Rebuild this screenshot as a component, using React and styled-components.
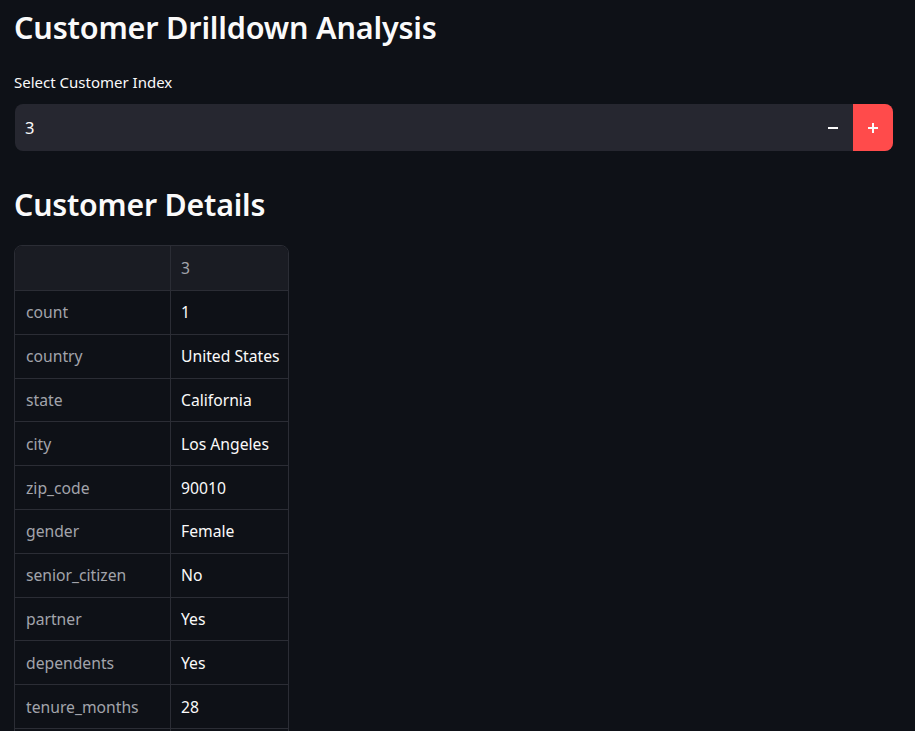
import React from 'react';
import styled, { createGlobalStyle } from 'styled-components';

const GlobalStyle = createGlobalStyle`
  html, body {
    margin: 0;
    padding: 0;
    background: #0e1117;
    color: #fafafa;
    font-family: "Noto Sans", "Open Sans", sans-serif;
  }
`

const Page = styled.main`
  padding: 0 22px 0 14px;
  min-height: 731px;
`

const Title = styled.h1`
  margin: 0;
  padding: 7px 0 0;
  font-size: 30.6px;
  font-weight: 600;
  line-height: 40px;
  letter-spacing: -0.2px;
`

const Label = styled.label`
  display: block;
  margin-top: 25px;
  font-size: 15px;
  line-height: 20px;
`

const NumberBox = styled.div`
  display: flex;
  align-items: stretch;
  margin-top: 12px;
  height: 47px;
  margin-left: 1px;
  border-radius: 8px;
  overflow: hidden;
  background: #262730;
`

const Value = styled.div`
  flex: 1;
  display: flex;
  align-items: center;
  padding-left: 10px;
  font-size: 16.5px;
`

const StepButton = styled.button`
  width: 40px;
  border: none;
  padding: 0;
  display: flex;
  align-items: center;
  justify-content: center;
  background: ${p => (p.$active ? '#ff4b4b' : 'transparent')};
  color: #fafafa;
  cursor: pointer;
`

const SubTitle = styled.h2`
  margin: 35px 0 0;
  font-size: 30.3px;
  font-weight: 600;
  line-height: 38px;
  letter-spacing: -0.2px;
`

const Table = styled.table`
  margin-top: 21px;
  border-collapse: separate;
  border-spacing: 0;
  border: 1px solid #2b2d35;
  border-radius: 8px;
  font-size: 15.7px;
  overflow: hidden;
`

const HeadCell = styled.th`
  height: 44px;
  padding: 0 10px;
  text-align: left;
  font-weight: 400;
  color: #a2a4ab;
  background: #1a1c23;
  border-bottom: 1px solid #2b2d35;
  border-left: ${p => (p.$first ? 'none' : '1px solid #2b2d35')};
  width: ${p => (p.$first ? '135px' : 'auto')};
`

const IndexCell = styled.td`
  height: 42.8px;
  padding: 0 10px 0 11px;
  color: #a2a4ab;
  border-bottom: 1px solid #2b2d35;
`

const DataCell = styled.td`
  height: 42.8px;
  padding: 0 8px 0 10px;
  color: #fafafa;
  border-left: 1px solid #2b2d35;
  border-bottom: 1px solid #2b2d35;
  white-space: nowrap;
`

const rows = [
  ['count', '1'],
  ['country', 'United States'],
  ['state', 'California'],
  ['city', 'Los Angeles'],
  ['zip_code', '90010'],
  ['gender', 'Female'],
  ['senior_citizen', 'No'],
  ['partner', 'Yes'],
  ['dependents', 'Yes'],
  ['tenure_months', '28'],
  ['phone_service', 'Yes'],
]

const Minus = () => (
  <svg width="12" height="12" viewBox="0 0 12 12">
    <rect x="1" y="5" width="10" height="2" fill="currentColor" />
  </svg>
)

const Plus = () => (
  <svg width="12" height="12" viewBox="0 0 12 12">
    <rect x="1" y="5" width="10" height="2" fill="currentColor" />
    <rect x="5" y="1" width="2" height="10" fill="currentColor" />
  </svg>
)

export default function App() {
  return (
    <Page>
      <GlobalStyle />
      <Title>Customer Drilldown Analysis</Title>
      <Label>Select Customer Index</Label>
      <NumberBox>
        <Value>3</Value>
        <StepButton aria-label="decrement"><Minus /></StepButton>
        <StepButton $active aria-label="increment"><Plus /></StepButton>
      </NumberBox>
      <SubTitle>Customer Details</SubTitle>
      <Table>
        <thead>
          <tr>
            <HeadCell $first></HeadCell>
            <HeadCell>3</HeadCell>
          </tr>
        </thead>
        <tbody>
          {rows.map(([k, v]) => (
            <tr key={k}>
              <IndexCell>{k}</IndexCell>
              <DataCell>{v}</DataCell>
            </tr>
          ))}
        </tbody>
      </Table>
    </Page>
  )
}
